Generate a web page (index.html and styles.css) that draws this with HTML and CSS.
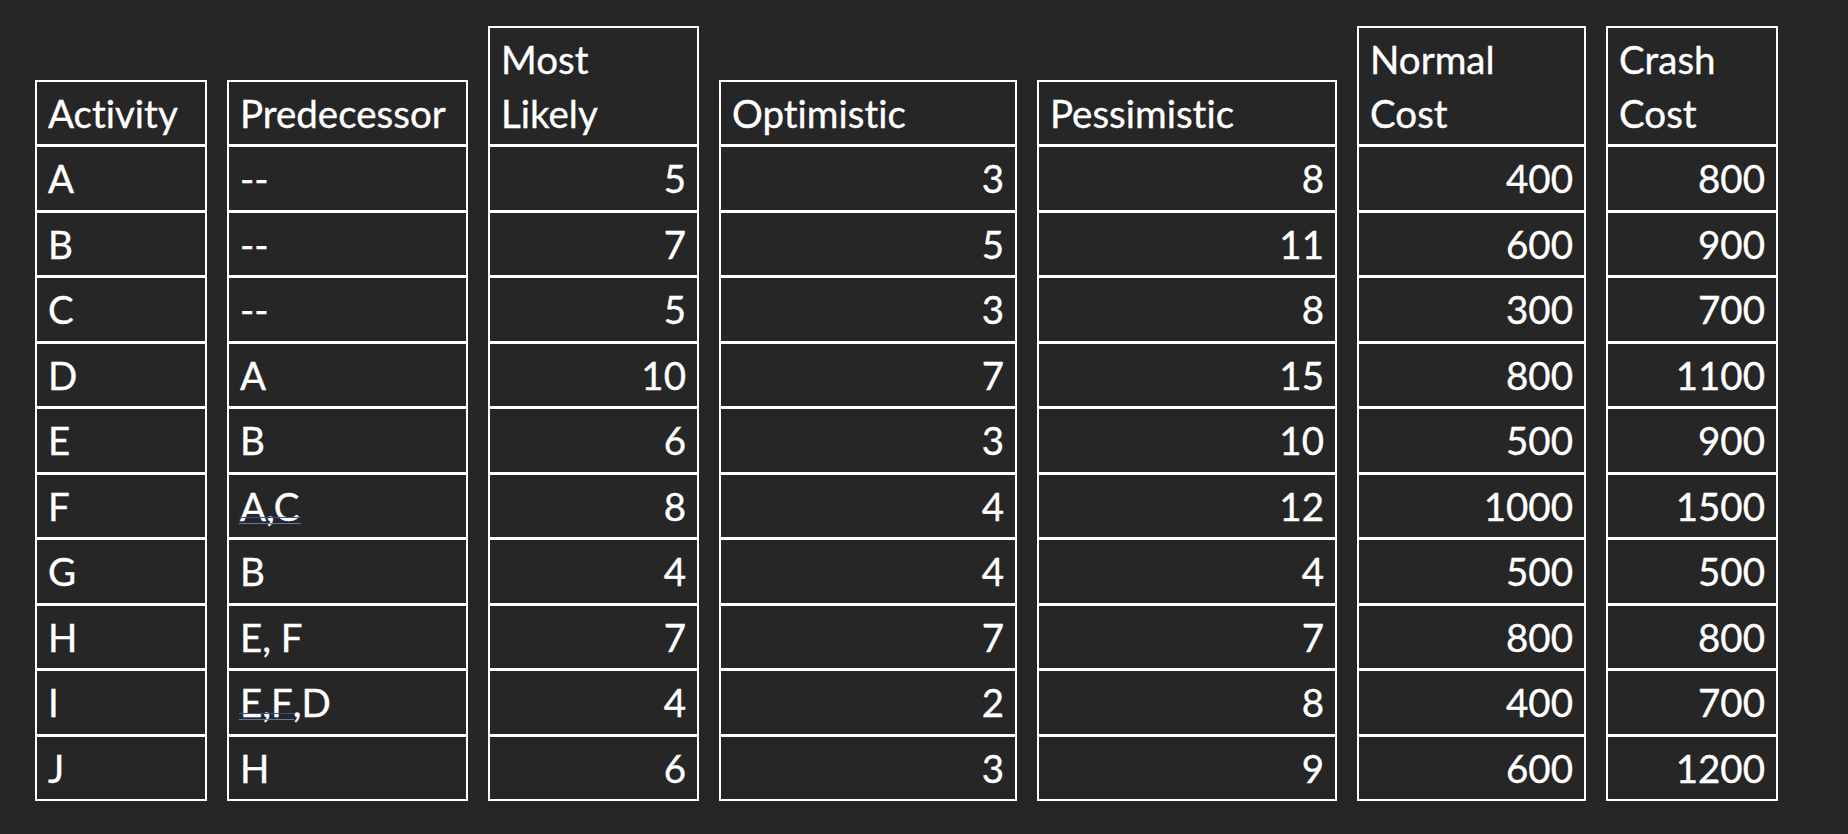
FILE: index.html
```html
<!DOCTYPE html>
<html lang="en">
<head>
<meta charset="utf-8">
<title>Activity table</title>
<link rel="stylesheet" href="styles.css">
</head>
<body>
<div class="sheet">
  <div class="col w-act">
    <div class="cell head">Activity</div>
    <div class="cell">A</div><div class="cell">B</div><div class="cell">C</div><div class="cell">D</div><div class="cell">E</div>
    <div class="cell">F</div><div class="cell">G</div><div class="cell">H</div><div class="cell">I</div><div class="cell">J</div>
  </div>
  <div class="col w-pre">
    <div class="cell head">Predecessor</div>
    <div class="cell">--</div><div class="cell">--</div><div class="cell">--</div><div class="cell">A</div><div class="cell">B</div>
    <div class="cell"><span class="gram">A,C</span></div><div class="cell">B</div><div class="cell">E, F</div>
    <div class="cell"><span class="gram">E,F</span>,D</div><div class="cell">H</div>
  </div>
  <div class="col w-ml num">
    <div class="cell head">Most<br>Likely</div>
    <div class="cell">5</div><div class="cell">7</div><div class="cell">5</div><div class="cell">10</div><div class="cell">6</div>
    <div class="cell">8</div><div class="cell">4</div><div class="cell">7</div><div class="cell">4</div><div class="cell">6</div>
  </div>
  <div class="col w-opt num">
    <div class="cell head">Optimistic</div>
    <div class="cell">3</div><div class="cell">5</div><div class="cell">3</div><div class="cell">7</div><div class="cell">3</div>
    <div class="cell">4</div><div class="cell">4</div><div class="cell">7</div><div class="cell">2</div><div class="cell">3</div>
  </div>
  <div class="col w-pes num">
    <div class="cell head">Pessimistic</div>
    <div class="cell">8</div><div class="cell">11</div><div class="cell">8</div><div class="cell">15</div><div class="cell">10</div>
    <div class="cell">12</div><div class="cell">4</div><div class="cell">7</div><div class="cell">8</div><div class="cell">9</div>
  </div>
  <div class="col w-nc num">
    <div class="cell head">Normal<br>Cost</div>
    <div class="cell">400</div><div class="cell">600</div><div class="cell">300</div><div class="cell">800</div><div class="cell">500</div>
    <div class="cell">1000</div><div class="cell">500</div><div class="cell">800</div><div class="cell">400</div><div class="cell">600</div>
  </div>
  <div class="col w-cc num">
    <div class="cell head">Crash<br>Cost</div>
    <div class="cell">800</div><div class="cell">900</div><div class="cell">700</div><div class="cell">1100</div><div class="cell">900</div>
    <div class="cell">1500</div><div class="cell">500</div><div class="cell">800</div><div class="cell">700</div><div class="cell">1200</div>
  </div>
</div>
</body>
</html>
```
FILE: styles.css
```css
html, body {
  margin: 0;
  padding: 0;
  background: #262626;
}
body {
  width: 1848px;
  height: 834px;
  overflow: hidden;
  font-family: Lato, "Noto Sans", sans-serif;
  font-size: 38.5px;
  font-variant-ligatures: none;
  -webkit-text-stroke: 0.35px #ffffff;
  color: #ffffff;
}
.sheet {
  display: flex;
  align-items: flex-end;
  gap: 20px;
  padding-left: 35px;
  height: 801px;
  box-sizing: border-box;
}
.col {
  display: flex;
  flex-direction: column;
  border: 2px solid #ffffff;
  box-sizing: border-box;
}
.cell {
  line-height: 54px;
  padding: 4px 11px 4.5px 11px;
  white-space: nowrap;
}
.cell + .cell {
  border-top: 3px solid #ffffff;
}
.num .cell {
  text-align: right;
}
.num .cell.head {
  text-align: left;
}
.w-act { width: 172px; }
.w-pre { width: 241px; }
.w-ml  { width: 211px; }
.w-opt { width: 298px; }
.w-pes { width: 300px; }
.w-nc  { width: 229px; }
.w-cc  { width: 172px; }
.gram {
  position: relative;
}
.gram::after {
  content: "";
  position: absolute;
  left: -1px;
  right: -1px;
  bottom: 5px;
  height: 5px;
  border-top: 1px solid #34508c;
  border-bottom: 1px solid #5a78b8;
}
```
